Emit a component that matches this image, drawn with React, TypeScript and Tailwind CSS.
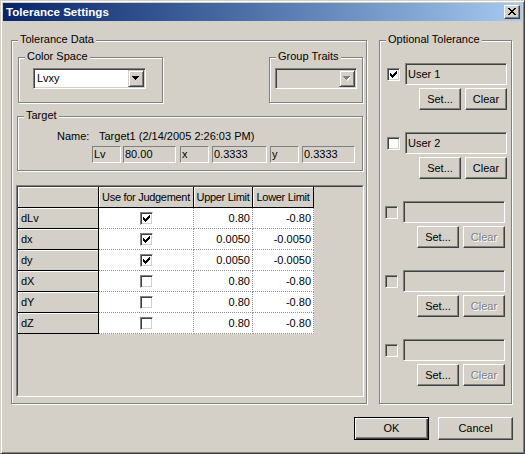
import type { ReactNode } from 'react';

const sunken =
  'border border-t-[#808080] border-l-[#808080] border-b-white border-r-white shadow-[inset_1px_1px_0_#404040,inset_-1px_-1px_0_#d4d0c8]';
const raised =
  'border border-t-white border-l-white border-b-[#404040] border-r-[#404040] shadow-[inset_-1px_-1px_0_#808080]';
const etched = 'relative border border-[#808080] shadow-[inset_1px_1px_0_#fff,1px_1px_0_#fff]';

const CHECK_PATH =
  'M6 0h1v1h-1z M5 1h2v1h-2z M0 2h1v1h-1z M4 2h3v1h-3z M0 3h2v1h-2z M3 3h3v1h-3z M0 4h5v1h-5z M1 5h3v1h-3z M2 6h1v1h-1z';
const CLOSE_PATH =
  'M0 0h2v1h-2z M6 0h2v1h-2z M1 1h2v1h-2z M5 1h2v1h-2z M2 2h4v1h-4z M3 3h2v1h-2z M2 4h4v1h-4z M1 5h2v1h-2z M5 5h2v1h-2z M0 6h2v1h-2z M6 6h2v1h-2z';
const ARROW_PATH = 'M0 0h7v1h-7z M1 1h5v1h-5z M2 2h3v1h-3z M3 3h1v1h-1z';

function Group({ label, className, children }: { label: string; className: string; children?: ReactNode }) {
  return (
    <div className={`${etched} ${className}`}>
      <span className="absolute -top-[8px] left-[6px] bg-[#d4d0c8] px-[2px] leading-[13px]">{label}</span>
      {children}
    </div>
  );
}

function Check({ checked, disabled }: { checked?: boolean; disabled?: boolean }) {
  return (
    <div
      className={`flex h-[13px] w-[13px] shrink-0 items-center justify-center ${sunken} ${disabled ? 'bg-[#d4d0c8]' : 'bg-white'}`}
    >
      {checked && (
        <svg width="7" height="7" viewBox="0 0 7 7" shapeRendering="crispEdges">
          <path d={CHECK_PATH} fill="#000" />
        </svg>
      )}
    </div>
  );
}

function Btn({ children, disabled, className }: { children: ReactNode; disabled?: boolean; className: string }) {
  return (
    <div
      className={`flex items-center justify-center leading-[13px] ${raised} ${className} ${
        disabled ? 'text-[#808080] [text-shadow:1px_1px_0_#fff]' : 'text-black'
      }`}
    >
      {children}
    </div>
  );
}

function Combo({ value, disabled, className }: { value?: string; disabled?: boolean; className: string }) {
  return (
    <div className={`flex h-[21px] p-[1px] ${sunken} ${disabled ? 'bg-[#d4d0c8]' : 'bg-white'} ${className}`}>
      <div className="flex flex-1 items-center pl-[2px] leading-[13px]">{value}</div>
      <div className="flex w-[16px] items-center justify-center border border-t-[#d4d0c8] border-l-[#d4d0c8] border-b-[#404040] border-r-[#404040] bg-[#d4d0c8] shadow-[inset_1px_1px_0_#fff,inset_-1px_-1px_0_#808080]">
        <svg width="8" height="5" viewBox="0 0 8 5" shapeRendering="crispEdges">
          {disabled ? (
            <>
              <path d={ARROW_PATH} fill="#fff" transform="translate(1 1)" />
              <path d={ARROW_PATH} fill="#808080" />
            </>
          ) : (
            <path d={ARROW_PATH} fill="#000" />
          )}
        </svg>
      </div>
    </div>
  );
}

function StaticField({ text, className }: { text: string; className: string }) {
  return (
    <div
      className={`flex h-[17px] items-center border border-t-[#808080] border-l-[#808080] border-b-white border-r-white pl-[1px] leading-[13px] ${className}`}
    >
      {text}
    </div>
  );
}

const rows: [string, boolean, string, string][] = [
  ['dLv', true, '0.80', '-0.80'],
  ['dx', true, '0.0050', '-0.0050'],
  ['dy', true, '0.0050', '-0.0050'],
  ['dX', false, '0.80', '-0.80'],
  ['dY', false, '0.80', '-0.80'],
  ['dZ', false, '0.80', '-0.80'],
];

const fixedCell =
  'flex h-full items-center border-r border-b border-black bg-[#d4d0c8] shadow-[inset_1px_1px_0_#fff] leading-[13px]';
const dataCell = 'flex h-full items-center border-r border-b border-dotted border-[#909090] bg-white leading-[13px]';

function Grid() {
  return (
    <div className="mt-[14px] ml-[4px] h-[212px] w-[348px] border border-t-[#808080] border-l-[#808080] border-b-white border-r-white bg-[#d4d0c8]">
      <div className="flex h-full w-full flex-col items-start border border-t-[#404040] border-l-[#404040] border-b-[#d4d0c8] border-r-[#d4d0c8]">
        <div className="flex h-[21px] tracking-[-0.3px]">
          <div className={`${fixedCell} w-[81px]`} />
          <div className={`${fixedCell} w-[95px] justify-center`}>Use for Judgement</div>
          <div className={`${fixedCell} w-[59px] justify-center`}>Upper Limit</div>
          <div className={`${fixedCell} w-[61px] justify-center`}>Lower Limit</div>
        </div>
        {rows.map(([name, use, upper, lower]) => (
          <div key={name} className="flex h-[21px]">
            <div className={`${fixedCell} w-[81px] pl-[3px]`}>{name}</div>
            <div className={`${dataCell} w-[95px] justify-center`}>
              <Check checked={use} />
            </div>
            <div className={`${dataCell} w-[59px] justify-end pr-[2px]`}>{upper}</div>
            <div className={`${dataCell} w-[61px] justify-end pr-[2px]`}>{lower}</div>
          </div>
        ))}
      </div>
    </div>
  );
}

const users = [
  { label: 'User 1', checked: true, enabled: true },
  { label: 'User 2', checked: false, enabled: true },
  { label: '', checked: false, enabled: false },
  { label: '', checked: false, enabled: false },
  { label: '', checked: false, enabled: false },
];

function UserSlot({ label, checked, enabled }: { label: string; checked: boolean; enabled: boolean }) {
  return (
    <div className="flex flex-col">
      <div className="flex items-center">
        <div className={enabled ? 'ml-[7px]' : 'ml-[5px]'}>
          <Check checked={checked} disabled={!enabled} />
        </div>
        <div className={`ml-[5px] flex h-[22px] w-[102px] items-center bg-[#d4d0c8] pl-[2px] leading-[13px] ${sunken}`}>
          {label}
        </div>
      </div>
      <div className={`mt-[3px] flex gap-[4px] ${enabled ? 'ml-[39px]' : 'ml-[37px]'}`}>
        <Btn className="h-[22px] w-[42px]">Set...</Btn>
        <Btn className="h-[22px] w-[42px]" disabled={!enabled}>
          Clear
        </Btn>
      </div>
    </div>
  );
}

export default function App() {
  return (
    <div className="h-[454px] w-[525px] overflow-hidden bg-[#d4d0c8] font-['Liberation_Sans',Arial,sans-serif] text-[11px] text-black">
      <div className="flex h-full flex-col border border-t-[#d4d0c8] border-l-[#d4d0c8] border-b-[#404040] border-r-[#404040] p-[2px] shadow-[inset_1px_1px_0_#fff,inset_-1px_-1px_0_#808080]">
        {/* Title bar */}
        <div className="flex h-[18px] shrink-0 items-center bg-linear-to-r from-[#0a246a] to-[#a6caf0] pl-[3px] pr-[2px]">
          <span className="text-[11.6px] font-bold leading-[14px] text-white">Tolerance Settings</span>
          <div className={`ml-auto flex h-[14px] w-[16px] items-center justify-center bg-[#d4d0c8] ${raised}`}>
            <svg width="8" height="7" viewBox="0 0 8 7" shapeRendering="crispEdges" className="-mt-px -ml-px">
              <path d={CLOSE_PATH} fill="#000" />
            </svg>
          </div>
        </div>

        {/* Body */}
        <div className="flex flex-1 flex-col pt-[19px] pr-[10px] pb-[11px] pl-[8px]">
          <div className="flex h-[364px] gap-[12px]">
            <Group label="Tolerance Data" className="flex w-[356px] flex-col">
              <div className="mt-[16px] flex">
                <Group label="Color Space" className="ml-[6px] h-[46px] w-[145px]">
                  <Combo value="Lvxy" className="mt-[10px] ml-[14px] w-[113px]" />
                </Group>
                <Group label="Group Traits" className="mr-[3px] ml-auto h-[46px] w-[94px]">
                  <Combo disabled className="mt-[10px] ml-[5px] w-[82px]" />
                </Group>
              </div>

              <Group label="Target" className="mt-[13px] ml-[5px] h-[55px] w-[346px]">
                <div className="mt-[13px] ml-[39px] flex leading-[13px]">
                  <span className="w-[42px]">Name:</span>
                  <span>Target1 (2/14/2005 2:26:03 PM)</span>
                </div>
                <div className="mt-[3px] ml-[74px] flex">
                  <StaticField text="Lv" className="w-[29px]" />
                  <StaticField text="80.00" className="ml-[2px] w-[53px]" />
                  <StaticField text="x" className="ml-[4px] w-[29px]" />
                  <StaticField text="0.3333" className="ml-[3px] w-[55px]" />
                  <StaticField text="y" className="ml-[3px] w-[29px]" />
                  <StaticField text="0.3333" className="ml-[3px] w-[53px]" />
                </div>
              </Group>

              <Grid />
            </Group>

            <Group label="Optional Tolerance" className="w-[133px]">
              <div className="flex flex-col gap-[22px] pt-[22px]">
                {users.map((u, i) => (
                  <UserSlot key={i} {...u} />
                ))}
              </div>
            </Group>
          </div>

          <div className="-mr-px mt-[13px] flex justify-end gap-[9px]">
            <div className="flex h-[23px] w-[75px] items-center justify-center border border-black leading-[13px] shadow-[inset_1px_1px_0_#fff,inset_-1px_-1px_0_#404040,inset_-2px_-2px_0_#808080]">
              OK
            </div>
            <Btn className="h-[23px] w-[75px]">Cancel</Btn>
          </div>
        </div>
      </div>
    </div>
  );
}
